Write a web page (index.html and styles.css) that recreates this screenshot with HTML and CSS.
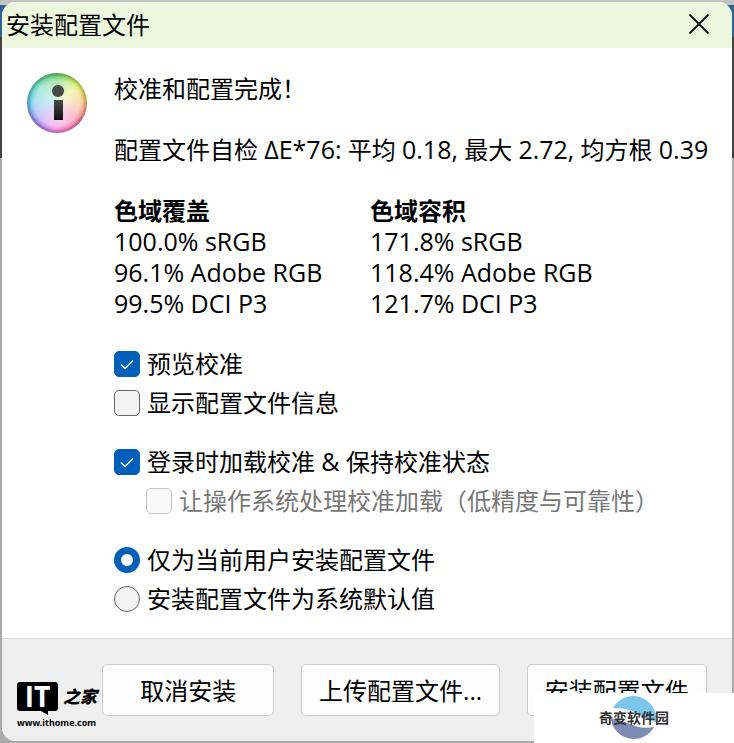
FILE: index.html
```html
<!DOCTYPE html>
<html lang="zh-CN">
<head>
    <meta charset="UTF-8">
    <meta name="viewport" content="width=device-width, initial-scale=1.0">
    <title>安装配置文件</title>
    <link rel="stylesheet" href="styles.css">
</head>
<body>
    <form class="dialog">
        <header class="titlebar">
            <h1 class="title">安装配置文件</h1>
            <button class="close" type="button" aria-label="关闭">
                <svg width="22" height="22" viewBox="0 0 22 22" aria-hidden="true">
                    <path d="M1.5 1.5L20.5 20.5M20.5 1.5L1.5 20.5" stroke="#111" stroke-width="1.8" fill="none"/>
                </svg>
            </button>
        </header>

        <main class="content">
            <div class="info-icon">
                <svg width="62" height="64" viewBox="0 0 62 64" aria-hidden="true">
                    <defs>
                        <radialGradient id="glow">
                            <stop offset="0" stop-color="#fff" stop-opacity="0.8"/>
                            <stop offset="0.75" stop-color="#fff" stop-opacity="0.55"/>
                            <stop offset="0.88" stop-color="#fff" stop-opacity="0.2"/>
                            <stop offset="0.94" stop-color="#555" stop-opacity="0.25"/>
                            <stop offset="1" stop-color="#777" stop-opacity="0.4"/>
                        </radialGradient>
                        <linearGradient id="stem" x1="0" y1="0" x2="0" y2="1">
                            <stop offset="0" stop-color="#4a4a4a"/>
                            <stop offset="1" stop-color="#111"/>
                        </linearGradient>
                    </defs>
                    <foreignObject x="0" y="0" width="60" height="60">
                        <div class="wheel"></div>
                    </foreignObject>
                    <circle cx="30" cy="30" r="30" fill="url(#glow)"/>
                    <circle cx="31" cy="18" r="6" fill="#484848"/>
                    <rect x="27" y="27" width="9" height="20" fill="url(#stem)"/>
                </svg>
            </div>

            <div class="details">
                <p class="message">校准和配置完成！</p>
                <p class="message">配置文件自检 <span class="latin">ΔE*76:</span> 平均 <span class="latin">0.18,</span> 最大 <span class="latin">2.72,</span> 均方根 <span class="latin">0.39</span></p>

                <div class="gamut">
                    <section>
                        <h2 class="gamut-title">色域覆盖</h2>
                        <ul class="gamut-list latin">
                            <li>100.0% sRGB</li>
                            <li>96.1% Adobe RGB</li>
                            <li>99.5% DCI P3</li>
                        </ul>
                    </section>
                    <section>
                        <h2 class="gamut-title">色域容积</h2>
                        <ul class="gamut-list latin">
                            <li>171.8% sRGB</li>
                            <li>118.4% Adobe RGB</li>
                            <li>121.7% DCI P3</li>
                        </ul>
                    </section>
                </div>

                <div class="options">
                    <label class="option"><input type="checkbox" checked>预览校准</label>
                    <label class="option"><input type="checkbox">显示配置文件信息</label>
                </div>
                <div class="options">
                    <label class="option"><input type="checkbox" checked><span>登录时加载校准 <span class="latin">&amp; </span>保持校准状态</span></label>
                    <label class="option nested"><input type="checkbox" disabled>让操作系统处理校准加载（低精度与可靠性）</label>
                </div>
                <div class="options">
                    <label class="option"><input type="radio" name="scope" checked>仅为当前用户安装配置文件</label>
                    <label class="option"><input type="radio" name="scope">安装配置文件为系统默认值</label>
                </div>
            </div>
        </main>

        <footer class="actions">
            <button class="btn" type="button">取消安装</button>
            <button class="btn btn-upload" type="button">上传配置文件...</button>
            <button class="btn btn-install" type="submit">安装配置文件</button>
        </footer>
    </form>

    <div class="ithome">
        <div class="ithome-logo">
            <span class="ithome-it">IT</span>
            <span class="ithome-home">之家</span>
        </div>
        <div class="ithome-url">www.ithome.com</div>
    </div>

    <div class="site-mark">
        <svg class="site-logo" width="46" height="46" viewBox="0 0 46 46" aria-hidden="true">
            <path d="M2 13A23 23 0 0 1 45 27C31 25 27 13 2 13Z" fill="#7cc6ec"/>
            <path d="M0 24C13 23 24 36 43 32A23 23 0 0 1 0 24Z" fill="#7b8db5"/>
        </svg>
        <span class="site-name">奇变软件园</span>
    </div>
</body>
</html>
```

FILE: styles.css
```css
* {
    box-sizing: border-box;
}
body {
    margin: 0;
    padding: 2px;
    min-height: 100vh;
    position: relative;
    display: flex;
    font-family: "Open Sans", "Noto Sans CJK SC", sans-serif;
    font-size: 24px;
    line-height: 31px;
    color: #000;
    background: linear-gradient(#c4c4c4 5px, #2d6295 5px, #2d6295 37px, #444 37px, #444 158px, #aaa 158px);
}
h1, h2, p, ul {
    margin: 0;
    padding: 0;
    font-size: 24px;
}
.dialog {
    flex: 1;
    display: flex;
    flex-direction: column;
    background-color: #fff;
    border-radius: 14px;
    overflow: hidden;
}
.titlebar {
    display: flex;
    align-items: center;
    justify-content: space-between;
    height: 46px;
    padding: 0 20px 2px 4px;
    background-color: #edf7dd;
}
.title {
    font-weight: normal;
}
.close {
    display: flex;
    padding: 2px;
    border: none;
    background: none;
}
.content {
    flex: 1;
    display: flex;
    gap: 25px;
    padding: 25px 25px 0;
}
.info-icon {
    flex: none;
}
.wheel {
    width: 60px;
    height: 60px;
    border-radius: 50%;
    background: conic-gradient(#4cc450, #d7e94b 50deg, #f3b860 85deg, #ec6a90 130deg, #f075d8 180deg, #9a78ef 225deg, #50b8e8 270deg, #48cdb0 310deg, #4cc450);
}
.details {
    flex: 1;
    white-space: nowrap;
}
.message {
    margin-bottom: 30px;
}
.latin {
    font-size: 25px;
}
.gamut {
    display: grid;
    grid-template-columns: 208px 1fr;
    gap: 48px;
    margin-bottom: 25px;
}
.gamut-title {
    font-weight: bold;
}
.gamut-list {
    list-style: none;
}
.options {
    margin-bottom: 20px;
}
.options:last-child {
    margin-bottom: 16px;
}
.option {
    display: flex;
    align-items: center;
    gap: 7px;
    height: 39px;
}
.nested {
    margin-left: 32px;
    color: #777;
}
.option input {
    appearance: none;
    flex: none;
    width: 26px;
    height: 26px;
    margin: 0;
    border: 1px solid #666;
    border-radius: 5px;
    background: #f3f3f3;
}
.option input[type="checkbox"]:checked {
    border-color: #005fb8;
    background: #005fb8 url("data:image/svg+xml,%3Csvg xmlns='http://www.w3.org/2000/svg' viewBox='0 0 24 24'%3E%3Cpath d='M6 12.5l4 4 8-8' fill='none' stroke='white' stroke-width='1.3'/%3E%3C/svg%3E");
}
.option input:disabled {
    border-color: #c5c5c5;
    background: #f9f9f9;
}
.option input[type="radio"] {
    border-radius: 50%;
}
.option input[type="radio"]:checked {
    border: 7px solid #005fb8;
    background: #fff;
}
.actions {
    display: flex;
    gap: 27px;
    height: 103px;
    padding: 25px 25px 25px 100px;
    border-top: 1px solid #ddd;
    background-color: #efefef;
}
.btn {
    flex: 172 1 0;
    height: 52px;
    padding: 0;
    border: 1px solid #ccc;
    border-radius: 5px;
    background-color: #fdfdfd;
    font: inherit;
    color: #000;
    white-space: nowrap;
}
.btn-upload {
    flex-grow: 198;
}
.btn-install {
    flex-grow: 180;
}

/* source marks laid over the dialog */
.ithome {
    position: absolute;
    left: 17px;
    bottom: 12px;
    font-weight: bold;
    color: #000;
}
.ithome-logo {
    display: flex;
    align-items: center;
    gap: 5px;
    height: 30px;
}
.ithome-it {
    position: relative;
    width: 41px;
    border-radius: 3px;
    background-color: #000;
    color: #fff;
    font-size: 28px;
    line-height: 29px;
    text-align: center;
}
/* speech bubble tail */
.ithome-it::after {
    content: "";
    position: absolute;
    right: 10px;
    top: 100%;
    border-top: 4px solid #000;
    border-left: 7px solid transparent;
}
.ithome-home {
    font-size: 17px;
    font-style: italic;
    font-weight: 900;
}
.ithome-url {
    margin-top: 4px;
    font-family: "Noto Sans", sans-serif;
    font-size: 9px;
    line-height: 16px;
}
.site-mark {
    position: absolute;
    right: 0;
    bottom: 0;
    width: 200px;
    height: 50px;
    display: grid;
    place-items: center;
    background-color: #fff;
}
.site-logo, .site-name {
    grid-area: 1 / 1;
}
.site-name {
    font-size: 14px;
    font-weight: bold;
    line-height: 20px;
    color: #333;
}
```
